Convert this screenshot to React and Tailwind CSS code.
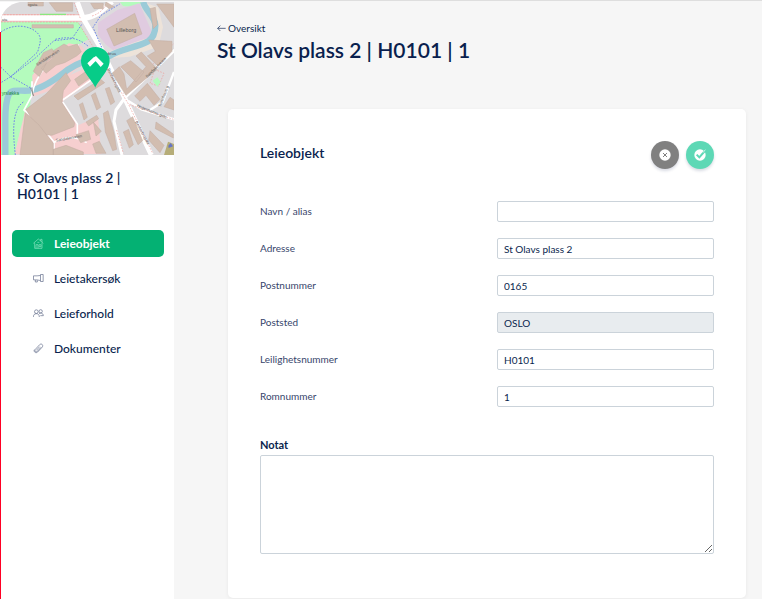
import { useState } from 'react';
import clsx from 'clsx';

const navItems = [
  { id: 'leieobjekt', label: 'Leieobjekt', icon: HouseIcon },
  { id: 'leietakersok', label: 'Leietakersøk', icon: MegaphoneIcon },
  { id: 'leieforhold', label: 'Leieforhold', icon: PeopleIcon },
  { id: 'dokumenter', label: 'Dokumenter', icon: ClipIcon },
];

const fields = [
  { id: 'alias', label: 'Navn / alias', value: '' },
  { id: 'address', label: 'Adresse', value: 'St Olavs plass 2' },
  { id: 'zip', label: 'Postnummer', value: '0165' },
  { id: 'city', label: 'Poststed', value: 'OSLO', disabled: true },
  { id: 'unit', label: 'Leilighetsnummer', value: 'H0101' },
  { id: 'room', label: 'Romnummer', value: '1' },
];

function LineIcon({ children }) {
  return (
    <svg viewBox="0 0 33 33" className="size-[11px] shrink-0" fill="none" stroke="currentColor" strokeWidth="2" aria-hidden="true">
      {children}
    </svg>
  );
}

function HouseIcon() {
  return (
    <LineIcon>
      <path d="M1 16 16 3l15 13M5 14v17h22V14M23 9V4h4v8M9 31V20h6v11M18 20h6v6h-6zM13 13h6" />
    </LineIcon>
  );
}

function MegaphoneIcon() {
  return (
    <LineIcon>
      <path d="M22 7.500C16 9 9 8.500 1.500 8.500v12c7.500 0 14.500 0 20.500 2M7 21v6h6v-5M22.500 4.500h8v21h-8z" />
    </LineIcon>
  );
}

function PeopleIcon() {
  return (
    <LineIcon>
      <circle cx="10" cy="11" r="5.5" />
      <circle cx="23" cy="10" r="5" />
      <path d="M1 27c0-6 3-10 9-10s9 4 9 10M18 18c2-2 3-3 5-3 5 0 8 4 8 8h-9" />
    </LineIcon>
  );
}

function ClipIcon() {
  return (
    <LineIcon>
      <path d="m24 13-11 12c-4 4-10-1-6-6L20 5c5-5 12 1 8 7L14 27c-5 5-13 0-10-7M20 11 10 22" />
    </LineIcon>
  );
}

function LocationMap() {
  return (
    <svg viewBox="3 6 519 459" className="block w-full" role="img" aria-label="Kart over Lilleborg">
      <defs>
        <clipPath id="map-edge">
          <path d="M3 58Q12 16 60 6H522V465H3Z" />
        </clipPath>
      </defs>
      <g clipPath="url(#map-edge)">
        <path fill="#dddbdd" d="M3 6h519v459H3z" />
        {/* Park */}
        <path fill="#b4fbbd" d="M3 66h232l30 52-26 14-60 8-56 52-27 58-6 70-28 64-18 81H3z" />
        <path fill="#b4fbbd" d="M360 6h65l-12 16-44-4z" />
        {/* Industrial ground */}
        <path fill="#f6cfcf" d="m97 226 50-60 60-36 38 8 30 40-52 34-50 52-76 26zM76 330l64-44 72-62 60-26 36 20-120 86 46 72 60-26 10 112H44z" />
        <path fill="#e0cbe0" d="m294 68 58-38 66-20 36 82-6 24-104 38-26-20-24-30z" />
        <path fill="#ede3d9" d="m325 156 92-34 40-12 4-40-22-60 36 12 14 60-14 58-86 30-58 4z" />
        {/* River */}
        <path d="M430 6c4 24 36 44 36 70 0 22-6 38-22 48-34 18-84 24-116 44-42 4-90 18-126 42-40 32-70 52-104 60-30 8-60-8-72 14-12 28-10 60-10 94v96" fill="none" stroke="#9bcbd8" strokeWidth="19" />
        {/* Roads */}
        <g fill="none" stroke="#efbcb8" strokeWidth="23">
          <path d="M3 54h245" />
        </g>
        <g fill="none" stroke="#fff" strokeLinejoin="round">
          <path d="M3 54h245c42-3 60-26 88-50" strokeWidth="17" />
          <path d="M232 6 250 56l50 84 34 70 40 84 80 171" strokeWidth="15" />
          <path d="m374 294 150-144M374 294l-26 36-6 34 24 101" strokeWidth="9" />
          <path d="m384 302 40 26 98 30M450 330l38-24 34-90" strokeWidth="7" />
          <path d="M96 244v42l-24 44 44 38 46 58v39M96 286c10-70 70-120 110-140l30-12M160 428c36-20 68-22 100 0M188 306l44 66v30M188 300l100-70" strokeWidth="5" />
        </g>
        <g fill="none" stroke="#ef9d9a" strokeWidth="2" strokeDasharray="5 4">
          <path d="M3 44h225M3 66h234M236 70l148 240 74 150M222 8l20 50M276 48c26-8 36-24 48-40M370 280 520 132M388 314l132 44M350 390l20 70M464 208l28 12-16 38-26-8z" />
        </g>
        {/* Footpaths */}
        <g fill="none" stroke="#6f86e8" strokeWidth="3" strokeDasharray="5 4">
          <path d="M3 96c40-28 86-18 106 0 20 16 10 36 4 60L32 230 3 202M32 230 3 248M32 230l64 36M32 230l74-56 56-52 54-6 30-44M70 306c-34 24-32 88-24 159M166 118c40-10 70-4 100 22M305 142l-26-60 24-36 56-34" />
        </g>
        {/* Buildings */}
        <g fill="#d2bdb0" stroke="#c2ada3" strokeWidth="1.5">
          <path d="m320 88 84-48 22 62-84 36z" />
          <path d="M84 6h46v12H84zM148 8h70v26h-50zM96 74h124v10H96z" />
          <path d="m100 214 30-56 26-12 10 18-24 20-24 46zM160 152l32-20 14 8 26-8 12 24-14 12-36 20-26 8-30 24-14-16 34-30z" />
          <path d="m78 328 60-46 60-64 14 24-22 30-4 36 38 60-2 12-66 26-20-2-36-38z" />
          <path d="m224 238 34-24 14 18-36 26zM222 288l80-50 12 10-80 52zM238 314l10-6 14 44-10 8zM274 286l12-8 16 44-12 8zM316 266l12-4 16 44-12 8zM258 366l32-20 6 10-30 22z" />
          <path d="m336 220 22-20 14 22 8 46 58-68-30-32 16-12 48 52-94 78zM362 200l30-18 40 34-24 30-24-24z" />
          <path d="m446 120 70 4v30l-42 44-32-30 24-14zM470 12h52v70l-28-38zM450 26l16-4 6 52-12 12zM318 6l24 14-14 6-14-10zM272 10h38v16h-28z" />
          <path d="m404 288 38-38 38 48-18 18-24-30-18 18zM468 366l52 36v12l-54-28zM380 362l18-12 30 72-14 12zM450 392l42 44-12 22-34-38z" />
          <path d="m228 404 38-12 6 26-30 10zM160 448l38-12 52 20v9h-90zM76 338l40 36 44 56v35H60z" />
          <path d="m310 340 14-8 18 66 8 50-12 4-22-56zM370 396l16-8 14 46-12 10zM280 366l24 28-16 14zM492 320l18-28 12 8v30zM278 432l20-8 20 36h-30z" />
        </g>
        <path fill="#b4fbbd" d="m458 242 14-10 10 14-10 14z" />
        <path d="m92 264 9 24m-5-26 3 25" stroke="#777" strokeWidth="2" />
        <path d="M120 43h78" stroke="#8be77e" strokeWidth="4" />
        <path d="m504 425 18 7v33h-30z" fill="#b6ad78" />
        <path d="m505 437 7-8 7 10-13 5" fill="#6675c5" />
        {/* Street names */}
        <g fill="#555" fontSize="12" fontFamily="'Liberation Sans', sans-serif">
          <text x="348" y="95" fontSize="16">Lilleborg</text>
          <text x="84" y="18">rgata</text>
          <text x="5" y="62">ata</text>
          <text x="5" y="286" fill="#238a44" fontSize="14">yrsløkka</text>
          <text transform="translate(112 198) rotate(-33)">Sandakerveien</text>
          <text transform="translate(168 425) rotate(-10)">Sandakerveien</text>
          <text transform="translate(322 208) rotate(64)">Bentsebrugata</text>
          <text transform="translate(405 366) rotate(61)">Bentsebrugata</text>
          <text transform="translate(442 234) rotate(-45)">Sandakerveien</text>
          <text transform="translate(410 320) rotate(22)">Hegermanns gate</text>
          <text transform="translate(482 322) rotate(-68)">Treschows g</text>
          <text x="317" y="165">ebrua</text>
        </g>
        {/* Marker */}
        <path fill="#07cc88" d="M286 263c-6-18-43-52-43-80a43 42 0 0 1 86 0c0 28-37 62-43 80z" />
        <path fill="#fff" d="m262 190 20-19 8 9-20 20zM279 174l9-6 23 23-9 10z" />
      </g>
    </svg>
  );
}

function Sidebar() {
  const [active, setActive] = useState('leieobjekt');

  return (
    <aside className="w-[174px] shrink-0 bg-white bg-linear-to-r from-[#ff0024] from-[1px] to-transparent to-[1px] bg-[position:0_30px] bg-no-repeat pl-px">
      <LocationMap />
      <h2 className="px-4 pt-[15px] text-[14px] leading-4 font-semibold">
        St Olavs plass 2 |<br />H0101 | 1
      </h2>
      <nav className="mt-7 flex flex-col gap-2 pr-2.5 pl-[11px]">
        {navItems.map(({ id, label, icon: Icon }) => (
          <a
            key={id}
            href={`#${id}`}
            onClick={() => setActive(id)}
            className={clsx(
              'flex h-[27px] items-center gap-2.5 rounded-[5px] px-[21px] text-[12px]',
              active === id ? 'bg-[#04b173] font-bold text-white' : 'font-medium'
            )}
          >
            <span className={active === id ? 'text-[#8ee6c3]' : 'text-[#5f6a88]'}>
              <Icon />
            </span>
            {label}
          </a>
        ))}
      </nav>
    </aside>
  );
}

function FieldRow({ field }) {
  return (
    <div className="grid grid-cols-[237fr_217fr] items-center">
      <label htmlFor={field.id} className="pb-0.5 text-[10px] leading-4 text-[#36456b]">
        {field.label}
      </label>
      <input
        id={field.id}
        type="text"
        defaultValue={field.value}
        disabled={field.disabled}
        className="h-[21px] w-full min-w-0 rounded-[2px] border border-[#cbd3da] bg-white px-1.5 text-[10px] text-[#0a1f4e] disabled:bg-[#e8ecef]"
      />
    </div>
  );
}

export default function App() {
  return (
    <div className="flex min-h-screen flex-col border-t border-[#dedede] bg-[#f6f6f6] font-['Lato','Open_Sans',sans-serif] text-[#0a1f4e]">
      <div className="flex flex-1 pt-px">
        <Sidebar />
        <main className="min-w-0 flex-1 pr-4">
          <header className="pt-5 pl-[43px]">
            <a href="#oversikt" className="flex w-fit items-center gap-0.5 text-[10px] leading-3">
              <svg viewBox="0 0 27 27" className="size-[9px]" fill="none" stroke="currentColor" strokeWidth="2" aria-hidden="true">
                <path d="M26 13H2m8-8-8 8 8 8" />
              </svg>
              Oversikt
            </a>
            <h1 className="mt-0.5 text-[21px] leading-7 font-semibold">St Olavs plass 2 | H0101 | 1</h1>
          </header>

          <section className="mt-[45px] ml-[54px] rounded-[5px] bg-white px-8 pt-8 pb-11 shadow-[0_1px_4px_rgba(0,0,0,0.06)]">
            <div className="flex items-start justify-between">
              <h2 className="pt-0.5 text-[14px] leading-5 font-semibold">Leieobjekt</h2>
              <div className="flex gap-[7px]">
                <button
                  type="button"
                  aria-label="Avbryt"
                  className="flex size-7 items-center justify-center rounded-full bg-[#808080] shadow-[0_2px_3px_rgba(20,30,80,0.16)]"
                >
                  <svg viewBox="0 0 36 36" className="size-3" aria-hidden="true">
                    <circle cx="18" cy="18" r="17" fill="#fff" />
                    <path d="m12 12 12 12m0-12L12 24" stroke="#808080" strokeWidth="3" />
                  </svg>
                </button>
                <button
                  type="button"
                  aria-label="Lagre"
                  className="flex size-7 items-center justify-center rounded-full bg-[#5dd8b5] shadow-[0_2px_3px_rgba(20,30,80,0.16)]"
                >
                  <svg viewBox="0 0 36 36" className="size-3" aria-hidden="true">
                    <circle cx="18" cy="18" r="17" fill="#fff" />
                    <path d="m8 17 8 8L35 3" fill="none" stroke="#5dd8b5" strokeWidth="6" />
                    <path d="m27 11 7-9" stroke="#fff" strokeWidth="2" />
                  </svg>
                </button>
              </div>
            </div>

            <form className="mt-8">
              <div className="flex flex-col gap-4">
                {fields.map((field) => (
                  <FieldRow key={field.id} field={field} />
                ))}
              </div>
              <label htmlFor="note" className="mt-7 block text-[11px] leading-5 font-bold">
                Notat
              </label>
              <textarea
                id="note"
                className="block h-[99px] w-full rounded-[2px] border border-[#cbd3da] bg-white p-1.5 text-[10px]"
              />
            </form>
          </section>
        </main>
      </div>
    </div>
  );
}
